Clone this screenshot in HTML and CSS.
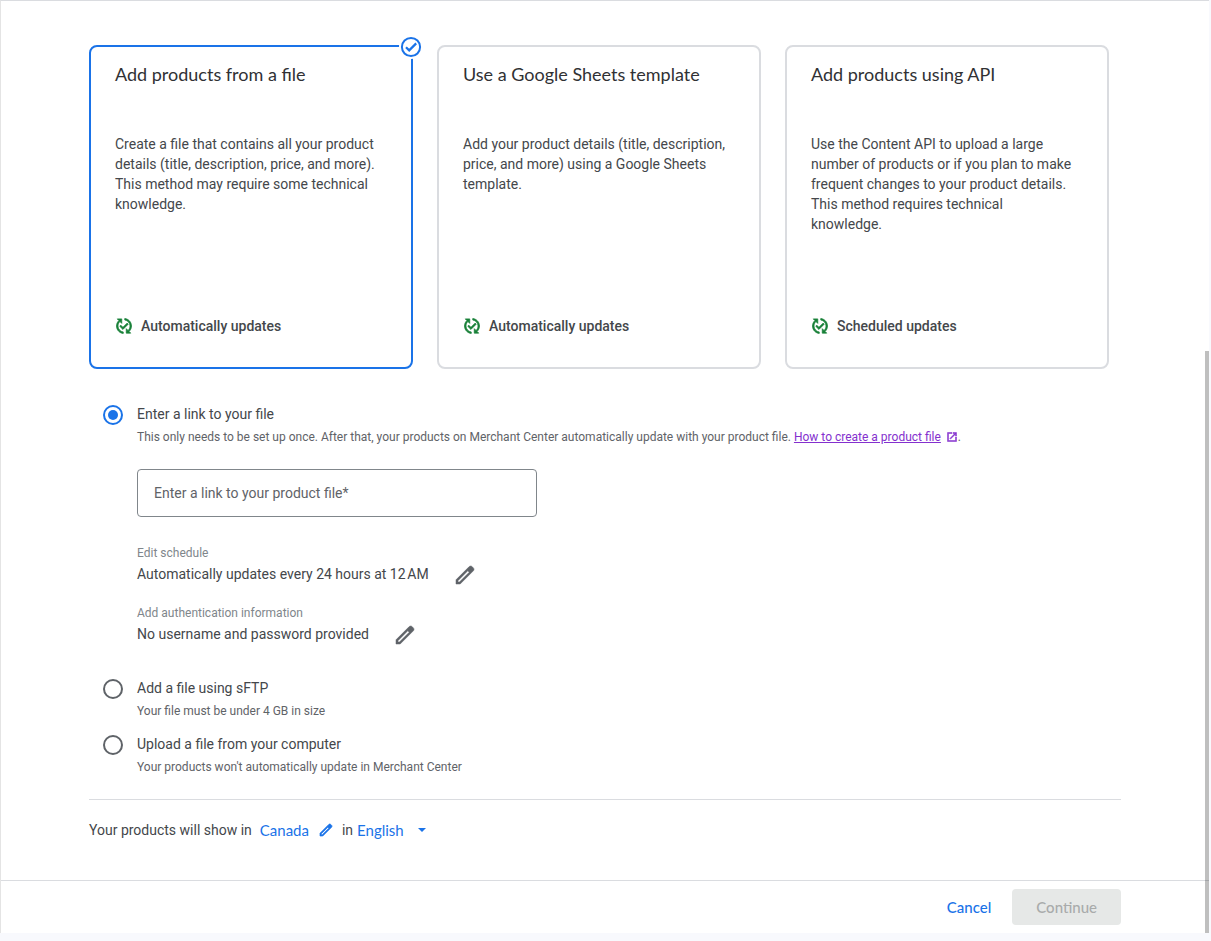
FILE: index.html
```html
<!DOCTYPE html>
<html lang="en">
<head>
<meta charset="utf-8">
<title>Add products</title>
<link rel="stylesheet" href="styles.css">
</head>
<body>
<svg class="symbols" aria-hidden="true">
  <symbol id="published" viewBox="0 0 24 24"><path d="M17.66 9.53l-7.07 7.07-4.24-4.24 1.41-1.41 2.83 2.83 5.66-5.66 1.41 1.41zM4 12c0-2.33 1.02-4.42 2.62-5.88L9 8.5v-6H3l2.2 2.2C3.24 6.52 2 9.11 2 12c0 5.19 3.95 9.45 9 9.95v-2.02c-3.94-.49-7-3.86-7-7.93zm18 0c0-5.19-3.95-9.45-9-9.95v2.02c3.94.49 7 3.86 7 7.93 0 2.33-1.02 4.42-2.62 5.88L15 15.5v6h6l-2.2-2.2c1.96-1.82 3.2-4.41 3.2-7.3z"/></symbol>
  <symbol id="pencil" viewBox="0 0 24 24"><path d="M20.41 4.94l-1.35-1.35c-.78-.78-2.05-.78-2.83 0L3 16.82V21h4.18L20.41 7.77c.79-.78.79-2.05 0-2.83zm-14 14.12L5 19v-1.36l9.82-9.82 1.41 1.41-9.82 9.83z"/></symbol>
  <symbol id="open" viewBox="0 0 24 24"><path d="M19 19H5V5h7V3H3v18h18v-9h-2v7zM14 3v2h3.59l-9.83 9.83 1.41 1.41L19 6.41V10h2V3h-7z"/></symbol>
</svg>
<div class="panel">
  <main class="content">
    <section class="cards">
      <article class="card card-selected">
        <h2 class="card-title">Add products from a file</h2>
        <p class="card-text">Create a file that contains all your product details (title, description, price, and more). This method may require some technical knowledge.</p>
        <p class="card-status"><svg class="status-icon"><use href="#published"/></svg>Automatically updates</p>
        <svg class="card-check" viewBox="0 0 24 24"><circle cx="12" cy="12" r="12" fill="#fff"/><circle cx="12" cy="12" r="9.1" fill="none" stroke="#1a73e8" stroke-width="2"/><path d="M7 12.2l3.2 3.2 7-7" fill="none" stroke="#1a73e8" stroke-width="2.2"/></svg>
      </article>
      <article class="card">
        <h2 class="card-title">Use a Google Sheets template</h2>
        <p class="card-text">Add your product details (title, description, price, and more) using a Google Sheets template.</p>
        <p class="card-status"><svg class="status-icon"><use href="#published"/></svg>Automatically updates</p>
      </article>
      <article class="card">
        <h2 class="card-title">Add products using API</h2>
        <p class="card-text">Use the Content API to upload a large number of products or if you plan to make frequent changes to your product details. This method requires technical knowledge.</p>
        <p class="card-status"><svg class="status-icon"><use href="#published"/></svg>Scheduled updates</p>
      </article>
    </section>

    <form class="options">
      <div class="option">
        <input class="radio" type="radio" name="source" id="source-link" checked>
        <div class="option-body">
          <label class="option-label" for="source-link">Enter a link to your file</label>
          <p class="hint">This only needs to be set up once. After that, your products on Merchant Center automatically update with your product file. <a class="help-link" href="#">How to create a product file</a> <svg class="open-icon"><use href="#open"/></svg>.</p>
          <input class="link-input" type="url" placeholder="Enter a link to your product file*" aria-label="Enter a link to your product file" required>
          <div class="setting">
            <div class="setting-name">Edit schedule</div>
            <div class="setting-row">Automatically updates every 24 hours at 12&#8239;AM
              <button class="icon-button" type="button" aria-label="Edit schedule"><svg class="pencil-icon"><use href="#pencil"/></svg></button></div>
          </div>
          <div class="setting">
            <div class="setting-name">Add authentication information</div>
            <div class="setting-row">No username and password provided
              <button class="icon-button" type="button" aria-label="Edit authentication information"><svg class="pencil-icon"><use href="#pencil"/></svg></button></div>
          </div>
        </div>
      </div>
      <div class="option">
        <input class="radio" type="radio" name="source" id="source-sftp">
        <div class="option-body">
          <label class="option-label" for="source-sftp">Add a file using sFTP</label>
          <p class="hint">Your file must be under 4 GB in size</p>
        </div>
      </div>
      <div class="option">
        <input class="radio" type="radio" name="source" id="source-upload">
        <div class="option-body">
          <label class="option-label" for="source-upload">Upload a file from your computer</label>
          <p class="hint">Your products won't automatically update in Merchant Center</p>
        </div>
      </div>
    </form>

    <div class="locale">
      <span class="locale-lead">Your products will show in</span>
      <button class="country" type="button">Canada<svg class="country-icon"><use href="#pencil"/></svg></button>
      <label for="language">in</label>
      <span class="language-wrap">
        <select class="language" id="language"><option>English</option></select>
        <svg class="caret" viewBox="0 0 8 4"><path d="M0 0h8L4 4z"/></svg>
      </span>
    </div>
  </main>
  <footer class="footer">
    <button class="button button-text" type="button">Cancel</button>
    <button class="button button-filled" type="button" disabled>Continue</button>
  </footer>
  <div class="scroll-thumb"></div>
</div>
</body>
</html>
```
FILE: styles.css
```css
* { box-sizing: border-box; }
body {
  margin: 0;
  min-height: 100vh;
  padding: 0 2px 8px 0;
  display: flex;
  background: #f8f9fd;
  color: #44474b;
  font: 14px/20px Roboto, "Liberation Sans", sans-serif;
}
h2, p { margin: 0; }
svg { fill: currentColor; }
button { font: inherit; cursor: pointer; }
.symbols { display: none; }

.panel {
  position: relative;
  flex: 1;
  display: flex;
  flex-direction: column;
  background: #fff;
  border-top: 1px solid #dadce0;
  border-left: 1px solid #e4e4e4;
}
.content { flex: 1; padding: 44px 88px 40px; }

.cards {
  display: grid;
  grid-template-columns: repeat(3, 1fr);
  gap: 24px;
  padding-right: 12px;
}
.card {
  position: relative;
  display: flex;
  flex-direction: column;
  min-height: 324px;
  padding: 16px 24px 31px;
  border: 2px solid #dadce0;
  border-radius: 8px;
}
.card-selected { border-color: #1a73e8; }
.card-title {
  min-height: 71px;
  color: #303134;
  font: 400 18px/22px "Google Sans", Lato, sans-serif;
}
.card-text { flex: 1; padding-right: 8px; }
.card-status {
  display: flex;
  align-items: center;
  gap: 8px;
  font-weight: 500;
}
.status-icon {
  width: 18px;
  height: 18px;
  color: #188038;
  stroke: currentColor;
  stroke-width: 1px;
}
.card-check {
  position: absolute;
  top: -12px;
  right: -12px;
  width: 24px;
  height: 24px;
}

.options {
  display: flex;
  flex-direction: column;
  gap: 13px;
  padding: 35px 14px 22px;
}
.option { display: flex; gap: 14px; }
.option-body { flex: 1; }
.option-label { display: block; }
.radio {
  appearance: none;
  display: grid;
  place-items: center;
  flex: none;
  width: 20px;
  height: 20px;
  margin: 1px 0 0;
  border: 2px solid #5f6368;
  border-radius: 50%;
}
.radio:checked { border-color: #1a73e8; }
.radio:checked::before {
  content: "";
  width: 10px;
  height: 10px;
  border-radius: 50%;
  background: #1a73e8;
}
.hint {
  padding-top: 3px;
  color: #5f6368;
  font-size: 12px;
}
.help-link { color: #8430ce; }
.open-icon {
  width: 12px;
  height: 12px;
  margin-left: 2px;
  color: #8430ce;
  stroke: currentColor;
  stroke-width: 1px;
  vertical-align: -2px;
}
.link-input {
  display: block;
  width: 400px;
  max-width: 100%;
  height: 48px;
  margin: 22px 0 28px;
  padding: 0 16px;
  border: 1px solid #80868b;
  border-radius: 4px;
  font: inherit;
}
.link-input::placeholder { color: #5f6368; opacity: 1; }
.setting { margin-bottom: 18px; }
.setting-name { color: #80868b; font-size: 12px; line-height: 16px; }
.setting-row {
  display: flex;
  align-items: center;
  gap: 24px;
  height: 26px;
}
.icon-button {
  display: flex;
  padding: 2px 0 0;
  border: 0;
  background: none;
  color: #5f6368;
}
.pencil-icon {
  width: 24px;
  height: 24px;
  stroke: currentColor;
  stroke-width: 0.5px;
}

.locale {
  display: flex;
  align-items: center;
  gap: 4px;
  padding-top: 20px;
  border-top: 1px solid #dadce0;
}
.locale-lead { margin-right: 4px; }
.country {
  display: flex;
  align-items: center;
  gap: 9px;
  padding: 0;
  margin-right: 4px;
  border: 0;
  background: none;
  color: #1a73e8;
  font: 400 15px/20px "Google Sans", Lato, sans-serif;
}
.country-icon {
  width: 16px;
  height: 16px;
  stroke: currentColor;
  stroke-width: 1px;
}
.language-wrap { display: flex; align-items: center; color: #1a73e8; }
.language {
  appearance: none;
  padding: 0 22px 0 0;
  border: 0;
  background: none;
  color: inherit;
  font: 400 15px/20px "Google Sans", Lato, sans-serif;
}
.caret { width: 8px; height: 4px; margin-left: -8px; pointer-events: none; }

.footer {
  display: flex;
  justify-content: flex-end;
  gap: 12px;
  padding: 8px 88px;
  border-top: 1px solid #dadce0;
}
.button {
  height: 36px;
  border: 0;
  border-radius: 4px;
  font: 500 15px/20px "Google Sans", Lato, sans-serif;
}
.button-text { padding: 0 9px; background: none; color: #1a73e8; }
.button-filled { padding: 0 24px; background: #e6e8e7; color: #a9abab; cursor: default; }
.scroll-thumb {
  position: absolute;
  right: 0;
  bottom: 0;
  width: 4px;
  height: 62.4%;
  background: rgba(0, 0, 0, .25);
}
```
